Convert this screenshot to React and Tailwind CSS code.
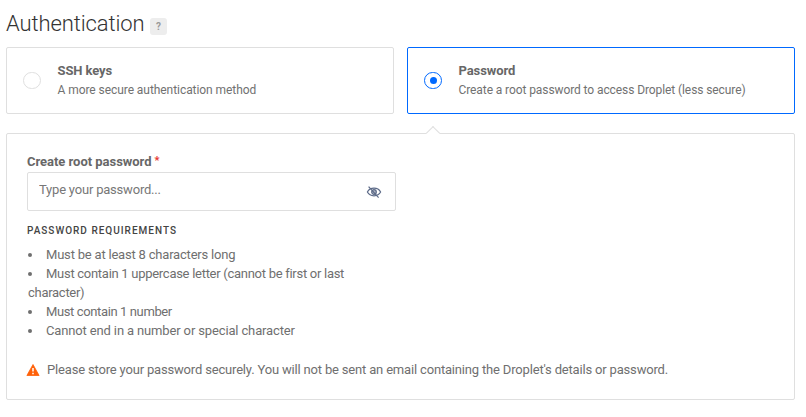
import React, { useState } from 'react';

const methods = [
  { id: 'ssh', title: 'SSH keys', text: 'A more secure authentication method', tracking: 'tracking-[-0.06px]' },
  { id: 'password', title: 'Password', text: 'Create a root password to access Droplet (less secure)', tracking: 'tracking-[-0.09px]' },
];

const requirements = [
  { text: 'Must be at least 8 characters long', tracking: 'tracking-[-0.2px]' },
  { text: 'Must contain 1 uppercase letter (cannot be first or last character)', tracking: 'tracking-[-0.28px]' },
  { text: 'Must contain 1 number', tracking: 'tracking-[-0.38px]' },
  { text: 'Cannot end in a number or special character', tracking: 'tracking-[-0.14px]' },
];

function EyeOffIcon() {
  return (
    <svg width="16" height="12" viewBox="0 0 16 12" fill="none" stroke="#5b6987" strokeWidth="1.2">
      <path d="M1.4 6C2.8 3.4 5 2.2 8 2.2S13.2 3.4 14.6 6c-1.4 2.6-3.6 3.8-6.6 3.8S2.8 8.6 1.4 6Z" />
      <circle cx="8" cy="6" r="2.3" fill="#5b6987" fillOpacity="0.5" />
      <path d="M2.6 .6 12.6 11.6" />
    </svg>
  );
}

function WarningIcon() {
  return (
    <svg width="14" height="12" viewBox="0 0 14 12">
      <path d="M7 .5 13.1 11.5H.9Z" fill="#ff6109" stroke="#ff6109" strokeWidth=".8" strokeLinejoin="round" />
      <path d="M7 4v3.6M7 8.8v1.4" stroke="#fff" strokeWidth="1.5" />
    </svg>
  );
}

export default function App() {
  const [method, setMethod] = useState('password');
  const [visible, setVisible] = useState(false);

  return (
    <div className="w-[806px] h-[417px] overflow-hidden bg-white pl-1.5 pr-[11px] pt-2 font-['Roboto',sans-serif] text-[#676767]">
      <div className="flex h-[39px] pt-px">
        <h1 className="w-[137px] whitespace-nowrap text-[22px] font-light leading-[30px] tracking-[-0.1px] text-[#333]">Authentication</h1>
        <span className="ml-[7px] mt-[9px] flex size-[17px] items-center justify-center rounded-[3px] bg-[#ededed] text-[10px] font-bold text-[#999]">?</span>
      </div>

      <div className="grid grid-cols-2 gap-[13px]">
        {methods.map((m) => (
          <button key={m.id} type="button" onClick={() => setMethod(m.id)}
            className={`flex h-[67px] items-center rounded-[2px] border pl-4 text-left ${method === m.id ? 'border-[#0069ff]' : 'border-[#dfdfdf]'}`}>
            <span className={`flex h-[17px] w-[18px] shrink-0 items-center justify-center rounded-full border ${method === m.id ? 'border-[#0069ff]' : 'border-[#dfdfdf]'}`}>
              {method === m.id && <span className="size-[7px] rounded-full bg-[#0069ff]" />}
            </span>
            <span className="ml-[16.5px] flex flex-col">
              <span className="mb-px -mt-px text-[13px] font-bold leading-[19px] tracking-[-0.1px]">{m.title}</span>
              <span className={`text-xs leading-[19px] text-[#717171] ${m.tracking}`}>{m.text}</span>
            </span>
          </button>
        ))}
      </div>

      <div className="relative mt-[19px] h-[267px] rounded-[2px] border border-[#dfdfdf] pl-[19px] pr-5 pt-[18px]">
        <span className="absolute left-[421px] top-[-6px] size-[10px] rotate-45 border-l border-t border-[#dfdfdf] bg-white" />

        <label htmlFor="password" className="flex pl-px text-[13px] font-bold leading-5 tracking-[-0.03px]">
          Create root password <span className="ml-[3px] text-[11px] leading-[18px] text-[#e5352b]">*</span>
        </label>
        <div className="ml-px flex h-[39px] w-[369px] items-center rounded-[2px] border border-[#dfdfdf] pl-[11px] pr-[13px]">
          <input id="password" type={visible ? 'text' : 'password'} placeholder="Type your password..."
            className="mb-1 min-w-0 flex-1 text-[13px] tracking-[-0.2px] outline-none placeholder:text-[#777]" />
          <button type="button" onClick={() => setVisible(!visible)}><EyeOffIcon /></button>
        </div>

        <h2 className="mt-[11px] pl-px text-[10px] font-medium leading-[18px] tracking-[1px] text-[#444]">PASSWORD REQUIREMENTS</h2>
        <ul className="mt-[5px] w-[340px] list-inside list-disc pl-0.5 text-[13px] leading-[19px] text-[#6f6f6f]">
          {requirements.map((item) => <li key={item.text} className={item.tracking}>{item.text}</li>)}
        </ul>

        <p className="mt-5 flex items-center text-[13px] leading-[19px] tracking-[-0.175px] text-[#6f6f6f]">
          <WarningIcon />
          <span className="ml-[7px]">Please store your password securely. You will not be sent an email containing the Droplet's details or password.</span>
        </p>
      </div>
    </div>
  );
}
